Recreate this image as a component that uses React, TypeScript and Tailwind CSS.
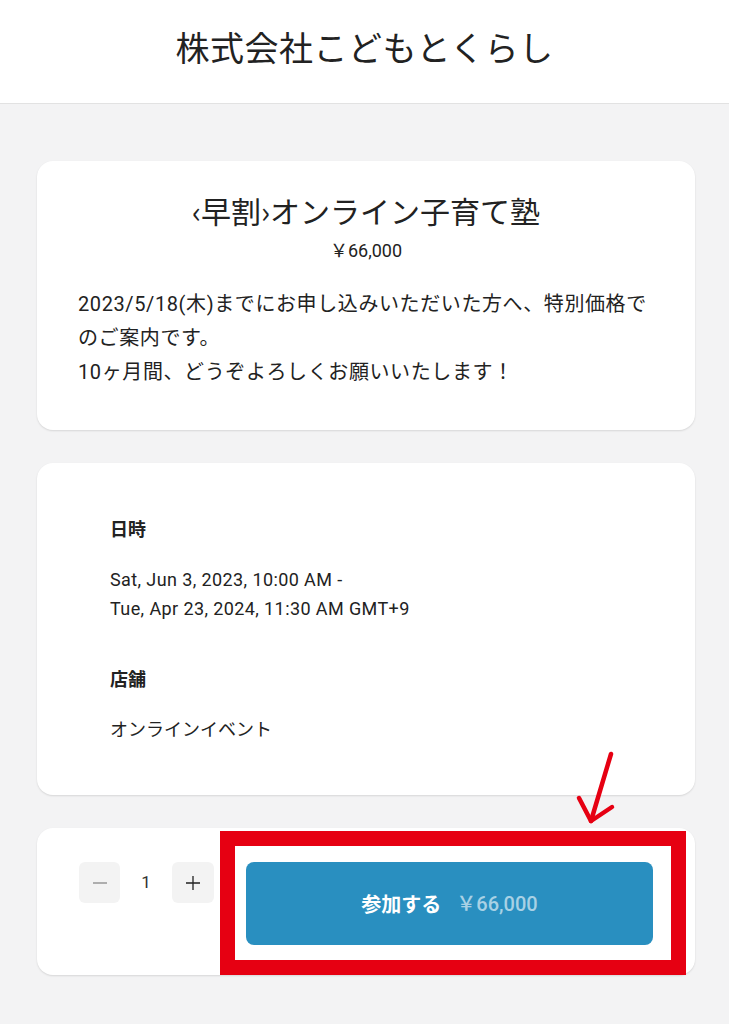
import React from "react";

export default function App() {
  return (
    <div
      className="relative min-h-[1024px] w-[729px] bg-[#f3f3f4] text-[#222]"
      style={{ fontFamily: 'Roboto, "Noto Sans CJK JP", sans-serif' }}
    >
      <header className="flex h-[104px] items-center justify-center border-b border-[#e2e2e2] bg-white pb-[10px]">
        <h1 className="text-[34px] font-normal tracking-[0.5px] text-[#222]" style={{ fontFamily: '"Noto Sans CJK JP", sans-serif' }}>
          株式会社こどもとくらし
        </h1>
      </header>

      <main className="ml-[37px] mr-[34px] flex flex-col gap-[33px] pt-[57px]">
        <section className="rounded-[16px] bg-white px-[41px] pb-[41px] pt-[28px] shadow-[0_1px_2px_rgba(0,0,0,0.12)]">
          <h2 className="text-center text-[30px] leading-[42px] text-[#222]" style={{ fontFamily: '"Noto Sans CJK JP", sans-serif' }}>
            ‹早割›オンライン子育て塾
          </h2>
          <p className="mt-[7px] text-center text-[18px] leading-[26px]">￥66,000</p>
          <p className="mt-[23px] text-[20px] leading-[34px] tracking-[0.6px]">
            2023/5/18(木)までにお申し込みいただいた方へ、特別価格でのご案内です。
            <br />
            10ヶ月間、どうぞよろしくお願いいたします！
          </p>
        </section>

        <section className="rounded-[16px] bg-white px-[73px] pb-[52px] pt-[54px] shadow-[0_1px_2px_rgba(0,0,0,0.12)]">
          <h3 className="text-[18px] font-bold leading-[26px]">日時</h3>
          <p className="mt-[22px] text-[18px] leading-[29px] tracking-[0.4px]">
            Sat, Jun 3, 2023, 10:00 AM -
            <br />
            Tue, Apr 23, 2024, 11:30 AM GMT+9
          </p>
          <h3 className="mt-[44px] text-[18px] font-bold leading-[26px]">店舗</h3>
          <p className="mt-[24px] text-[18px] leading-[26px]">オンラインイベント</p>
        </section>

        <section className="flex items-start gap-[32px] rounded-[16px] bg-white pb-[30px] pl-[42px] pr-[42px] pt-[34px] shadow-[0_1px_2px_rgba(0,0,0,0.12)]">
          <div className="flex items-center">
            <button className="flex h-[41px] w-[41px] items-center justify-center rounded-[6px] bg-[#f3f3f3] text-[#888]">
              <svg width="16" height="16" viewBox="0 0 16 16"><path d="M1 8h14" stroke="#888" strokeWidth="1.3" /></svg>
            </button>
            <span className="w-[52px] text-center text-[17px] text-[#333]">1</span>
            <button className="flex h-[41px] w-[42px] items-center justify-center rounded-[6px] bg-[#f3f3f3]">
              <svg width="16" height="16" viewBox="0 0 16 16"><path d="M1 8h14M8 1v14" stroke="#222" strokeWidth="1.3" /></svg>
            </button>
          </div>
          <button className="flex h-[83px] flex-1 items-center justify-center gap-[15px] rounded-[8px] bg-[#298fc0] text-[20px] font-bold text-white">
            <span style={{ fontFamily: '"Noto Sans CJK JP", sans-serif' }}>参加する</span>
            <span className="font-medium text-white/60">￥66,000</span>
          </button>
        </section>
      </main>

      {/* annotation overlay */}
      <div className="pointer-events-none absolute left-[220px] top-[831px] h-[144px] w-[466px] border-[15px] border-[#e60012]" />
      <svg className="pointer-events-none absolute left-[570px] top-[748px]" width="60" height="82" viewBox="0 0 60 82">
        <path d="M41 6 L21 73" stroke="#e60012" strokeWidth="4.5" strokeLinecap="round" fill="none" />
        <path d="M9 50 L21 73 L42 59" stroke="#e60012" strokeWidth="4.5" strokeLinecap="round" strokeLinejoin="round" fill="none" />
      </svg>
    </div>
  );
}
